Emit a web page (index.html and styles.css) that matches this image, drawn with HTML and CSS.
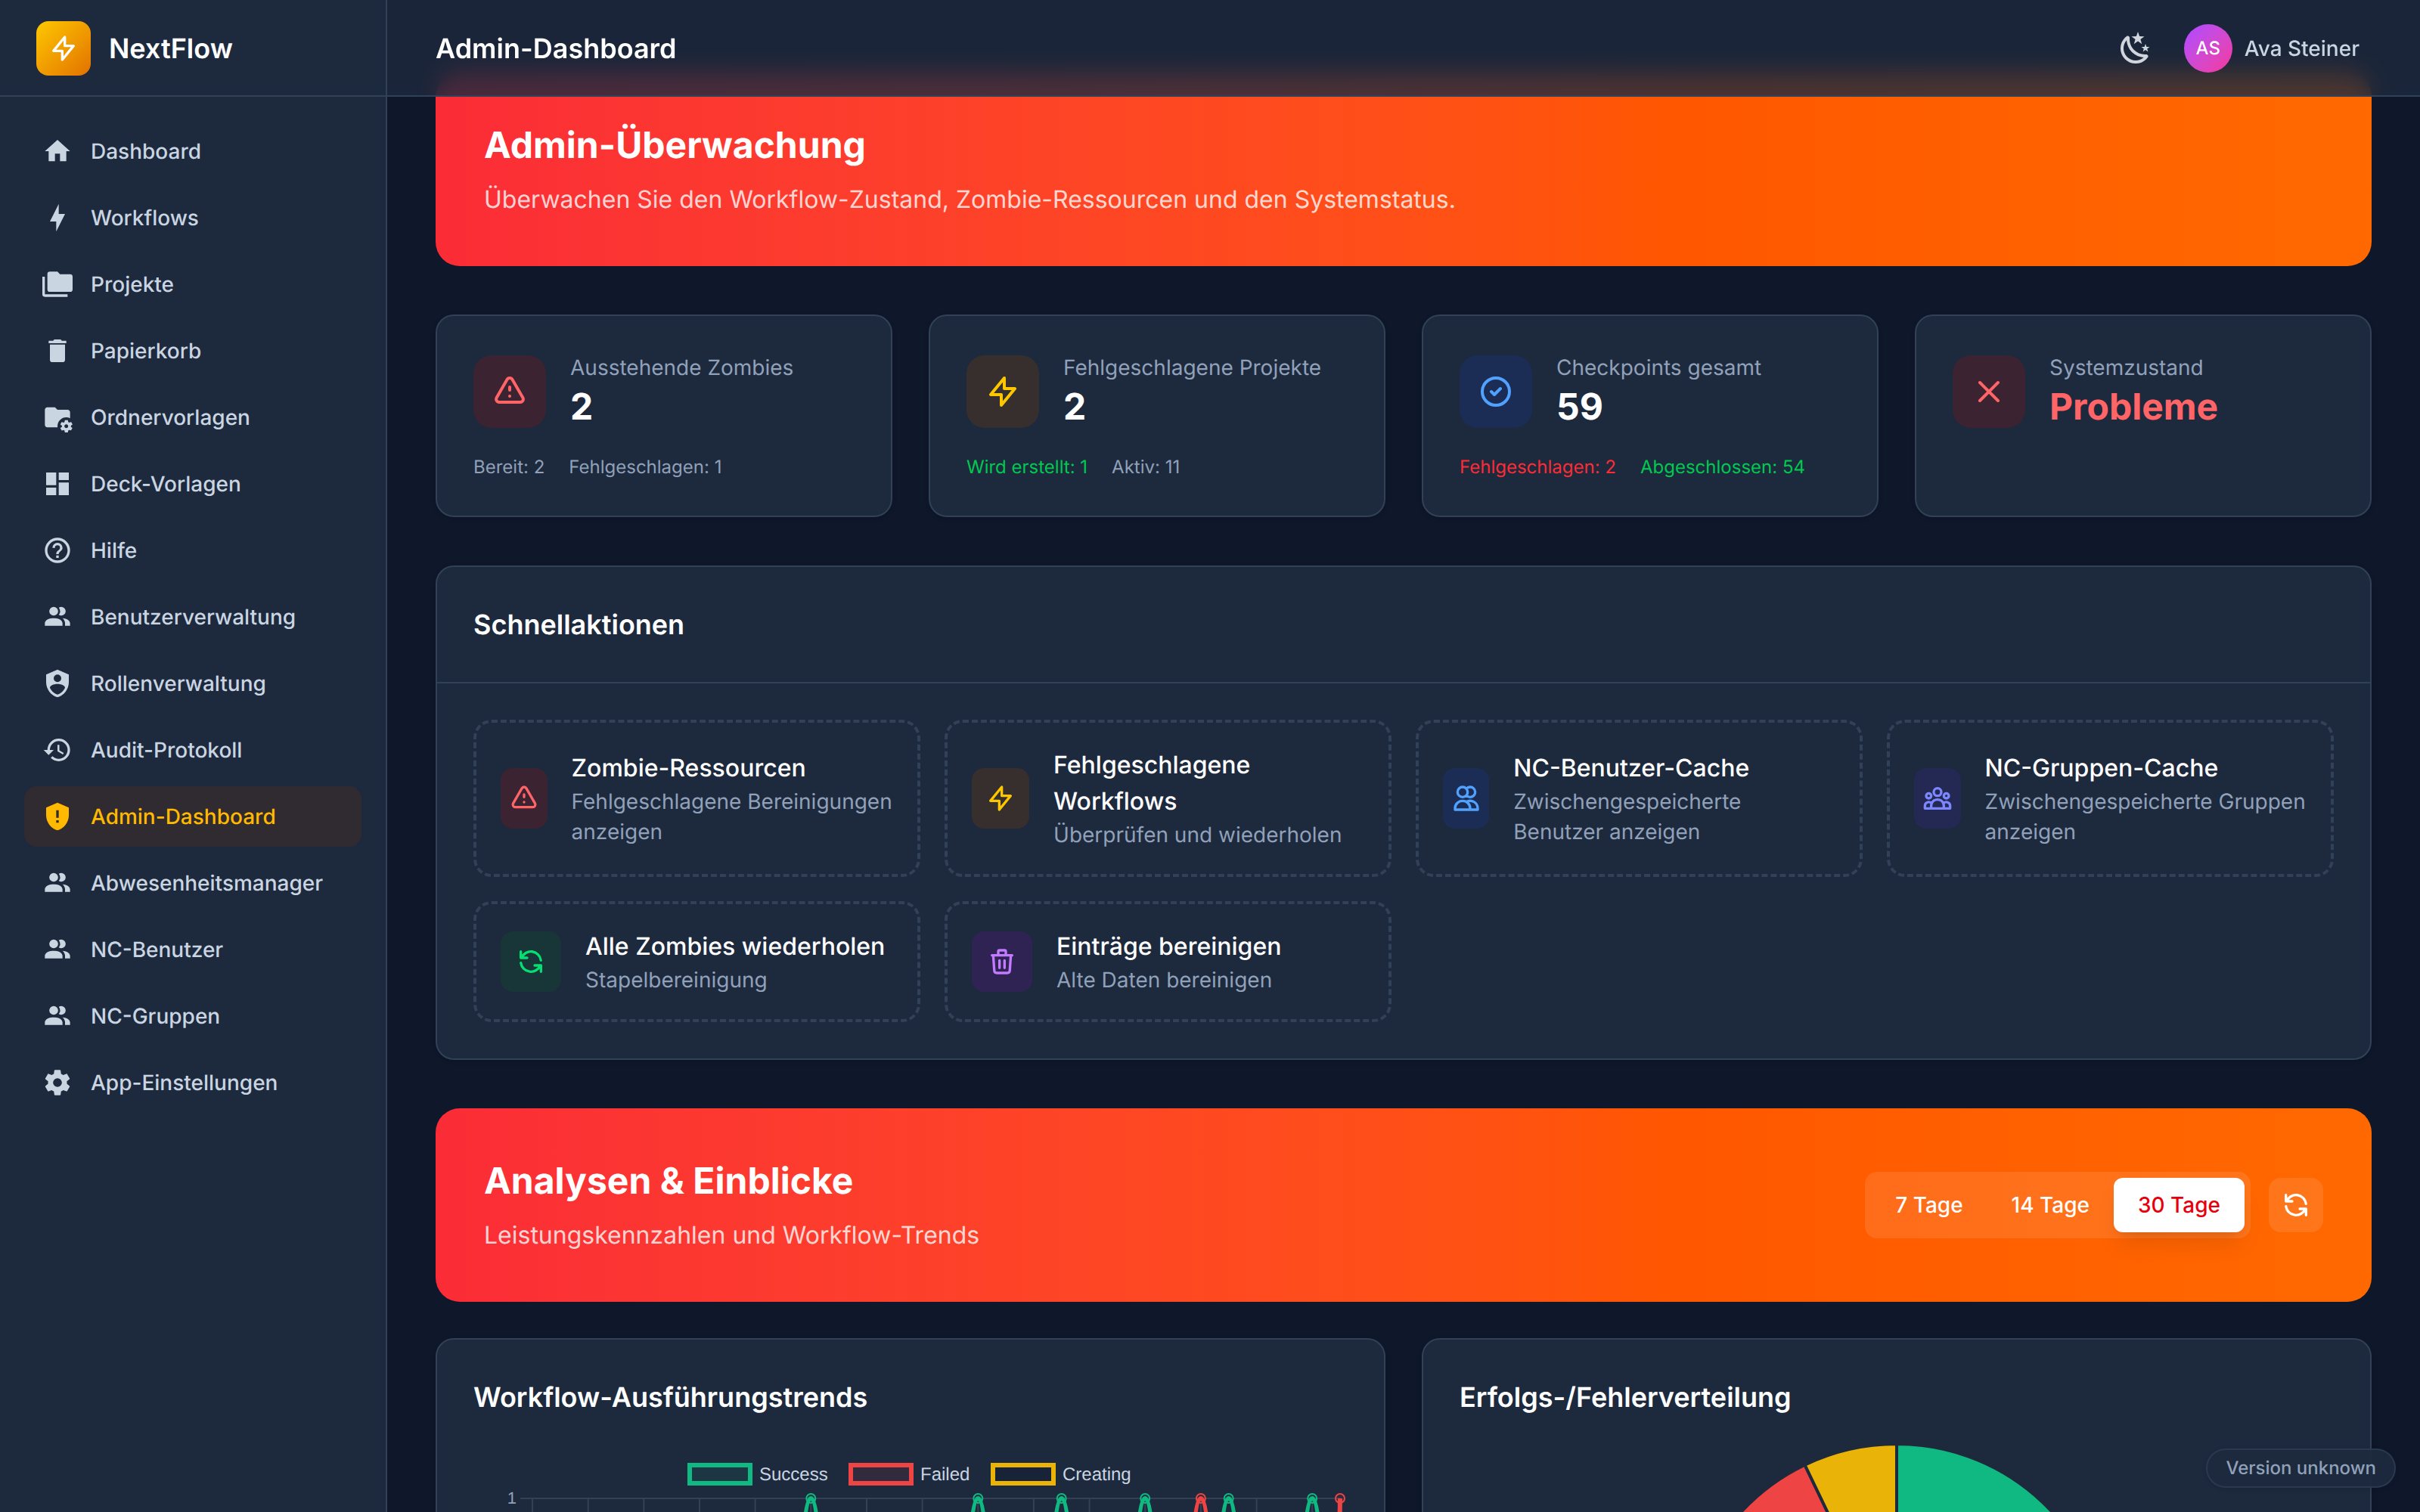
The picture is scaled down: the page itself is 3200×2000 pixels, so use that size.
FILE: index.html
```html
<!DOCTYPE html>
<html lang="de">
<head>
<meta charset="utf-8">
<title>NextFlow – Admin-Dashboard</title>
<link rel="stylesheet" href="styles.css">
</head>
<body>
<svg class="defs" width="0" height="0" aria-hidden="true">
  <symbol id="i-people" viewBox="0 0 24 24"><path d="M16 17V19H2V17S2 13 9 13 16 17 16 17M12.5 7.5A3.5 3.5 0 1 0 9 11A3.5 3.5 0 0 0 12.5 7.5M15.94 13A5.32 5.32 0 0 1 18 17V19H22V17S22 13.37 15.94 13M15 4A3.39 3.39 0 0 0 13.07 4.59A5 5 0 0 1 13.07 10.41A3.39 3.39 0 0 0 15 11A3.5 3.5 0 0 0 15 4Z"/></symbol>
  <symbol id="i-bolt" viewBox="0 0 24 24"><path d="M13 10V3L4 14h7v7l9-11h-7z"/></symbol>
  <symbol id="i-warn" viewBox="0 0 24 24"><path d="M12 9v2m0 4h.01m-6.938 4h13.856c1.54 0 2.502-1.667 1.732-3L13.732 4c-.77-1.333-2.694-1.333-3.464 0L3.34 16c-.77 1.333.192 3 1.732 3z"/></symbol>
  <symbol id="i-refresh" viewBox="0 0 24 24"><path d="M4 4v5h.582m15.356 2A8.001 8.001 0 004.582 9m0 0H9m11 11v-5h-.581m0 0a8.003 8.003 0 01-15.357-2m15.357 2H15"/></symbol>
</svg>
<div class="app">
  <aside class="sidebar">
    <div class="brand">
      <span class="logo"><svg class="line i40"><use href="#i-bolt"/></svg></span>
      <span class="brand-name">NextFlow</span>
    </div>
    <nav class="nav">
      <a class="nav-item"><svg class="fill i40" viewBox="0 0 24 24"><path d="M10,20V14H14V20H19V12H22L12,3L2,12H5V20H10Z"/></svg>Dashboard</a>
      <a class="nav-item"><svg class="fill i40" viewBox="0 0 24 24"><path d="M11 15H6L13 1V9H18L11 23V15Z"/></svg>Workflows</a>
      <a class="nav-item"><svg class="fill i40" viewBox="0 0 24 24"><path d="M22,4H14L12,2H6A2,2 0 0,0 4,4V16A2,2 0 0,0 6,18H22A2,2 0 0,0 24,16V6A2,2 0 0,0 22,4M2,6H0V20A2,2 0 0,0 2,22H20V20H2V6Z"/></svg>Projekte</a>
      <a class="nav-item"><svg class="fill i40" viewBox="0 0 24 24"><path d="M19,4H15.5L14.5,3H9.5L8.5,4H5V6H19M6,19A2,2 0 0,0 8,21H16A2,2 0 0,0 18,19V7H6V19Z"/></svg>Papierkorb</a>
      <a class="nav-item"><svg class="fill i40" viewBox="0 0 24 24"><path d="M4 4C2.89 4 2 4.89 2 6V18C2 19.11 2.9 20 4 20H12.1A7 7 0 0 1 12 19A7 7 0 0 1 19 12A7 7 0 0 1 22 12.68V8C22 6.9 21.1 6 20 6H12L10 4H4Z"/><path d="M22.7 19.6V18.6L23.8 17.8C23.9 17.7 23.9 17.6 23.9 17.5L22.9 15.8C22.9 15.7 22.7 15.7 22.6 15.7L21.4 16.2C21.1 16 20.8 15.8 20.5 15.7L20.3 14.4C20.3 14.3 20.2 14.2 20.1 14.2H18.1C17.9 14.2 17.8 14.3 17.8 14.4L17.6 15.7C17.3 15.9 17.1 16 16.8 16.2L15.6 15.7C15.5 15.7 15.4 15.7 15.3 15.8L14.3 17.5C14.3 17.6 14.3 17.7 14.4 17.8L15.5 18.6V19.6L14.4 20.4C14.3 20.5 14.3 20.6 14.3 20.7L15.3 22.4C15.4 22.5 15.5 22.5 15.6 22.5L16.8 22C17 22.2 17.3 22.4 17.6 22.5L17.8 23.8C17.9 23.9 18 24 18.1 24H20.1C20.2 24 20.3 23.9 20.3 23.8L20.5 22.5C20.8 22.3 21 22.2 21.3 22L22.5 22.4C22.6 22.4 22.7 22.4 22.8 22.3L23.8 20.6C23.9 20.5 23.9 20.4 23.8 20.4L22.7 19.6M19 20.5C18.2 20.5 17.5 19.8 17.5 19S18.2 17.5 19 17.5 20.5 18.2 20.5 19 19.9 20.5 19 20.5"/></svg>Ordnervorlagen</a>
      <a class="nav-item"><svg class="fill i40" viewBox="0 0 24 24"><path d="M13,3V9H21V3M13,21H21V11H13M3,21H11V15H3M3,13H11V3H3V13Z"/></svg>Deck-Vorlagen</a>
      <a class="nav-item"><svg class="fill i40" viewBox="0 0 24 24"><path d="M11,18H13V16H11V18M12,2A10,10 0 0,0 2,12A10,10 0 0,0 12,22A10,10 0 0,0 22,12A10,10 0 0,0 12,2M12,20C7.59,20 4,16.41 4,12C4,7.59 7.59,4 12,4C16.41,4 20,7.59 20,12C20,16.41 16.41,20 12,20M12,6A4,4 0 0,0 8,10H10A2,2 0 0,1 12,8A2,2 0 0,1 14,10C14,12 11,11.75 11,15H13C13,12.75 16,12.5 16,10A4,4 0 0,0 12,6Z"/></svg>Hilfe</a>
      <a class="nav-item"><svg class="fill i40"><use href="#i-people"/></svg>Benutzerverwaltung</a>
      <a class="nav-item"><svg class="fill i40" viewBox="0 0 24 24"><path d="M12,1L3,5V11C3,16.55 6.84,21.74 12,23C17.16,21.74 21,16.55 21,11V5L12,1M12,5A3,3 0 0,1 15,8A3,3 0 0,1 12,11A3,3 0 0,1 9,8A3,3 0 0,1 12,5M17.13,17C15.92,18.85 14.11,20.24 12,20.92C9.89,20.24 8.08,18.85 6.87,17C6.53,16.5 6.24,16 6,15.47C6,13.82 8.71,12.47 12,12.47C15.29,12.47 18,13.79 18,15.47C17.76,16 17.47,16.5 17.13,17Z"/></svg>Rollenverwaltung</a>
      <a class="nav-item"><svg class="fill i40" viewBox="0 0 24 24"><path d="M13.5,8H12V13L16.28,15.54L17,14.33L13.5,12.25V8M13,3A9,9 0 0,0 4,12H1L4.96,16.03L9,12H6A7,7 0 0,1 13,5A7,7 0 0,1 20,12A7,7 0 0,1 13,19C11.07,19 9.32,18.21 8.06,16.94L6.64,18.36C8.27,20 10.5,21 13,21A9,9 0 0,0 22,12A9,9 0 0,0 13,3"/></svg>Audit-Protokoll</a>
      <a class="nav-item active"><svg class="fill i40" viewBox="0 0 24 24"><path d="M12,1L3,5V11C3,16.55 6.84,21.74 12,23C17.16,21.74 21,16.55 21,11V5L12,1M11,7H13V13H11V7M11,15H13V17H11V15Z"/></svg>Admin-Dashboard</a>
      <a class="nav-item"><svg class="fill i40"><use href="#i-people"/></svg>Abwesenheitsmanager</a>
      <a class="nav-item"><svg class="fill i40"><use href="#i-people"/></svg>NC-Benutzer</a>
      <a class="nav-item"><svg class="fill i40"><use href="#i-people"/></svg>NC-Gruppen</a>
      <a class="nav-item"><svg class="fill i40" viewBox="0 0 24 24"><path d="M12,15.5A3.5,3.5 0 0,1 8.5,12A3.5,3.5 0 0,1 12,8.5A3.5,3.5 0 0,1 15.5,12A3.5,3.5 0 0,1 12,15.5M19.43,12.97C19.47,12.65 19.5,12.33 19.5,12C19.5,11.67 19.47,11.34 19.43,11L21.54,9.37C21.73,9.22 21.78,8.95 21.66,8.73L19.66,5.27C19.54,5.05 19.27,4.96 19.05,5.05L16.56,6.05C16.04,5.66 15.5,5.32 14.87,5.07L14.5,2.42C14.46,2.18 14.25,2 14,2H10C9.75,2 9.54,2.18 9.5,2.42L9.13,5.07C8.5,5.32 7.96,5.66 7.44,6.05L4.95,5.05C4.73,4.96 4.46,5.05 4.34,5.27L2.34,8.73C2.21,8.95 2.27,9.22 2.46,9.37L4.57,11C4.53,11.34 4.5,11.67 4.5,12C4.5,12.33 4.53,12.65 4.57,12.97L2.46,14.63C2.27,14.78 2.21,15.05 2.34,15.27L4.34,18.73C4.46,18.95 4.73,19.03 4.95,18.95L7.44,17.94C7.96,18.34 8.5,18.68 9.13,18.93L9.5,21.58C9.54,21.82 9.75,22 10,22H14C14.25,22 14.46,21.82 14.5,21.58L14.87,18.93C15.5,18.67 16.04,18.34 16.56,17.94L19.05,18.95C19.27,19.03 19.54,18.95 19.66,18.73L21.66,15.27C21.78,15.05 21.73,14.78 21.54,14.63L19.43,12.97Z"/></svg>App-Einstellungen</a>
    </nav>
  </aside>

  <div class="page">
    <header class="topbar">
      <h1 class="page-title">Admin-Dashboard</h1>
      <div class="topbar-right">
        <svg class="fill i48 moon" viewBox="0 0 24 24"><path d="M17.75,4.09L15.22,6.03L16.13,9.09L13.5,7.28L10.87,9.09L11.78,6.03L9.25,4.09L12.44,4L13.5,1L14.56,4L17.75,4.09M21.25,11L19.61,12.25L20.2,14.23L18.5,13.06L16.8,14.23L17.39,12.25L15.75,11L17.81,10.95L18.5,9L19.19,10.95L21.25,11M18.97,15.95C19.8,15.87 20.69,17.05 20.16,17.8C19.84,18.25 19.5,18.67 19.08,19.07C15.17,23 8.84,23 4.94,19.07C1.03,15.17 1.03,8.83 4.94,4.93C5.34,4.53 5.76,4.17 6.21,3.85C6.96,3.32 8.14,4.21 8.06,5.04C7.79,7.9 8.75,10.87 10.95,13.06C13.14,15.26 16.1,16.22 18.97,15.95M17.33,17.97C14.5,17.81 11.7,16.64 9.53,14.5C7.36,12.31 6.2,9.5 6.04,6.68C3.23,9.82 3.34,14.64 6.35,17.66C9.37,20.67 14.19,20.78 17.33,17.97Z"/></svg>
        <div class="user">
          <span class="avatar">AS</span>
          <span>Ava Steiner</span>
        </div>
      </div>
    </header>

    <main class="content">
      <section class="banner">
        <div>
          <h2 class="banner-title">Admin-Überwachung</h2>
          <p class="banner-sub">Überwachen Sie den Workflow-Zustand, Zombie-Ressourcen und den Systemstatus.</p>
        </div>
      </section>

      <section class="stats">
        <article class="card stat">
          <div class="stat-head">
            <span class="stat-icon red"><svg class="line i48"><use href="#i-warn"/></svg></span>
            <div><p class="stat-label">Ausstehende Zombies</p><p class="stat-value">2</p></div>
          </div>
          <div class="stat-foot"><span>Bereit: 2</span><span>Fehlgeschlagen: 1</span></div>
        </article>
        <article class="card stat">
          <div class="stat-head">
            <span class="stat-icon yellow"><svg class="line i48"><use href="#i-bolt"/></svg></span>
            <div><p class="stat-label">Fehlgeschlagene Projekte</p><p class="stat-value">2</p></div>
          </div>
          <div class="stat-foot"><span class="ok">Wird erstellt: 1</span><span>Aktiv: 11</span></div>
        </article>
        <article class="card stat">
          <div class="stat-head">
            <span class="stat-icon blue"><svg class="line i48" viewBox="0 0 24 24"><path d="M9 12l2 2 4-4m6 2a9 9 0 11-18 0 9 9 0 0118 0z"/></svg></span>
            <div><p class="stat-label">Checkpoints gesamt</p><p class="stat-value">59</p></div>
          </div>
          <div class="stat-foot"><span class="bad">Fehlgeschlagen: 2</span><span class="ok">Abgeschlossen: 54</span></div>
        </article>
        <article class="card stat">
          <div class="stat-head">
            <span class="stat-icon red"><svg class="line i48" viewBox="0 0 24 24"><path d="M6 18L18 6M6 6l12 12"/></svg></span>
            <div><p class="stat-label">Systemzustand</p><p class="stat-value problem">Probleme</p></div>
          </div>
        </article>
      </section>

      <section class="card quick">
        <h3 class="quick-head">Schnellaktionen</h3>
        <div class="quick-grid">
          <a class="action">
            <span class="action-icon red"><svg class="line i40"><use href="#i-warn"/></svg></span>
            <div><p class="action-title">Zombie-Ressourcen</p><p class="action-sub">Fehlgeschlagene Bereinigungen anzeigen</p></div>
          </a>
          <a class="action">
            <span class="action-icon yellow"><svg class="line i40"><use href="#i-bolt"/></svg></span>
            <div><p class="action-title">Fehlgeschlagene Workflows</p><p class="action-sub">Überprüfen und wiederholen</p></div>
          </a>
          <a class="action">
            <span class="action-icon blue"><svg class="line i40" viewBox="0 0 24 24"><path d="M12 4.354a4 4 0 110 5.292M15 21H3v-1a6 6 0 0112 0v1zm0 0h6v-1a6 6 0 00-9-5.197M13 7a4 4 0 11-8 0 4 4 0 018 0z"/></svg></span>
            <div><p class="action-title">NC-Benutzer-Cache</p><p class="action-sub">Zwischengespeicherte Benutzer anzeigen</p></div>
          </a>
          <a class="action">
            <span class="action-icon indigo"><svg class="line i40" viewBox="0 0 24 24"><path d="M17 20h5v-2a3 3 0 00-5.356-1.857M17 20H7m10 0v-2c0-.656-.126-1.283-.356-1.857M7 20H2v-2a3 3 0 015.356-1.857M7 20v-2c0-.656.126-1.283.356-1.857m0 0a5.002 5.002 0 019.288 0M15 7a3 3 0 11-6 0 3 3 0 016 0zm6 3a2 2 0 11-4 0 2 2 0 014 0zM7 10a2 2 0 11-4 0 2 2 0 014 0z"/></svg></span>
            <div><p class="action-title">NC-Gruppen-Cache</p><p class="action-sub">Zwischengespeicherte Gruppen anzeigen</p></div>
          </a>
          <a class="action">
            <span class="action-icon green"><svg class="line i40"><use href="#i-refresh"/></svg></span>
            <div><p class="action-title">Alle Zombies wiederholen</p><p class="action-sub">Stapelbereinigung</p></div>
          </a>
          <a class="action">
            <span class="action-icon purple"><svg class="line i40" viewBox="0 0 24 24"><path d="M19 7l-.867 12.142A2 2 0 0116.138 21H7.862a2 2 0 01-1.995-1.858L5 7m5 4v6m4-6v6m1-10V4a1 1 0 00-1-1h-4a1 1 0 00-1 1v3M4 7h16"/></svg></span>
            <div><p class="action-title">Einträge bereinigen</p><p class="action-sub">Alte Daten bereinigen</p></div>
          </a>
        </div>
      </section>

      <section class="banner">
        <div>
          <h2 class="banner-title">Analysen &amp; Einblicke</h2>
          <p class="banner-sub">Leistungskennzahlen und Workflow-Trends</p>
        </div>
        <div class="banner-tools">
          <div class="range">
            <button class="range-btn">7 Tage</button><button class="range-btn">14 Tage</button><button class="range-btn selected">30 Tage</button>
          </div>
          <button class="reload"><svg class="line i40"><use href="#i-refresh"/></svg></button>
        </div>
      </section>

      <section class="charts">
        <article class="card chart-card">
          <h3 class="chart-title">Workflow-Ausführungstrends</h3>
          <svg class="chart" viewBox="0 0 1156 600" width="1156" height="600">
            <defs>
              <path id="peak" d="M-36.8 490C-27.5 307 -14.7 0 0 0S27.5 307 36.8 490"/>
            </defs>
            <g class="legend">
              <rect x="286" y="30" width="80" height="24" class="s-green"/><text x="378" y="50">Success</text>
              <rect x="499" y="30" width="80" height="24" class="s-red"/><text x="591" y="50">Failed</text>
              <rect x="687" y="30" width="80" height="24" class="s-yellow"/><text x="779" y="50">Creating</text>
            </g>
            <path class="grid" d="M62 74H1146M78 74V600M151.7 74V600M225.3 74V600M299 74V600M372.6 74V600M446.3 74V600M520 74V600M593.6 74V600M667.3 74V600M740.9 74V600M814.6 74V600M888.2 74V600M961.9 74V600M1035.6 74V600M1109.2 74V600"/>
            <text class="tick" x="57" y="81" text-anchor="end">1</text>
            <g class="l-red">
              <use href="#peak" x="961.9" y="74"/>
              <path d="M1109.2 564C1136.7 564 1143 260 1146 74"/>
            </g>
            <g class="l-green">
              <use href="#peak" x="446.3" y="74"/>
              <use href="#peak" x="667.3" y="74"/>
              <use href="#peak" x="777.7" y="74"/>
              <use href="#peak" x="888.2" y="74"/>
              <use href="#peak" x="998.7" y="74"/>
              <use href="#peak" x="1109.2" y="74"/>
            </g>
            <g class="dots d-green">
              <circle cx="446.3" cy="74" r="6"/><circle cx="667.3" cy="74" r="6"/><circle cx="777.7" cy="74" r="6"/><circle cx="888.2" cy="74" r="6"/><circle cx="998.7" cy="74" r="6"/><circle cx="1109.2" cy="74" r="6"/>
            </g>
            <g class="dots d-red">
              <circle cx="961.9" cy="74" r="6"/><circle cx="1146" cy="74" r="6"/>
            </g>
          </svg>
        </article>
        <article class="card chart-card">
          <h3 class="chart-title">Erfolgs-/Fehlerverteilung</h3>
          <svg class="chart pie" viewBox="0 0 1156 600" width="1156" height="600">
            <path class="p-green" d="M578 282V2A280 280 0 1 1 326 404Z"/>
            <path class="p-red" d="M578 282L326 404A280 280 0 0 1 456.500 29.700Z"/>
            <path class="p-yellow" d="M578 282L456.500 29.700A280 280 0 0 1 578 2Z"/>
          </svg>
        </article>
      </section>
    </main>
    <div class="version">Version unknown</div>
  </div>
</div>
</body>
</html>
```
FILE: styles.css
```css
* { box-sizing: border-box; margin: 0; padding: 0; }
html, body { height: 100%; overflow: hidden; }
body {
  background: #0f172b;
  color: #fff;
  font-family: Inter, "Liberation Sans", sans-serif;
  font-size: 32px;
  line-height: 48px;
  text-rendering: geometricPrecision;
}
h1, h2, h3 { font-weight: 600; }
button { border: 0; background: none; color: inherit; font: inherit; }
.defs { position: absolute; }
svg { display: block; flex-shrink: 0; }
.i40 { width: 40px; height: 40px; }
.i48 { width: 48px; height: 48px; }
.fill { fill: currentColor; }
.line { fill: none; stroke: currentColor; stroke-width: 2; stroke-linecap: round; stroke-linejoin: round; }

.app { display: flex; height: 2000px; }

/* Sidebar */
.sidebar { width: 512px; flex-shrink: 0; background: #1d293d; border-right: 2px solid #314158; }
.brand { height: 128px; display: flex; align-items: center; gap: 24px; padding: 0 48px; box-shadow: inset 0 -2px #314158; }
.logo { width: 72px; height: 72px; display: flex; align-items: center; justify-content: center; border-radius: 16px; background: linear-gradient(to bottom right in oklab, oklch(85.2% .199 91.936), oklch(66.6% .179 58.318)); }
.brand-name { font-size: 36px; line-height: 56px; font-weight: 600; }
.nav { display: flex; flex-direction: column; gap: 8px; padding: 32px; }
.nav-item { height: 80px; display: flex; align-items: center; gap: 24px; padding: 0 24px; border-radius: 16px; color: #cad5e2; font-size: 28px; line-height: 40px; font-weight: 500; white-space: nowrap; }
.nav-item.active { color: #ffb900; background: rgba(123, 51, 6, .2); }

/* Top bar: floats over the scrolled content */
.page { position: relative; flex: 1; min-width: 0; overflow: hidden; }
.topbar { position: absolute; inset: 0 0 auto 0; z-index: 2; height: 128px; display: flex; align-items: center; justify-content: space-between; padding: 2px 80px 0 64px; background: rgba(29, 41, 61, .8); backdrop-filter: blur(16px); border-bottom: 2px solid #314158; }
.page-title { font-size: 36px; line-height: 56px; }
.topbar-right { display: flex; align-items: center; gap: 40px; }
.moon { color: #d1d5dc; }
.user { display: flex; align-items: center; gap: 16px; color: #cad5e2; font-size: 28px; line-height: 40px; font-weight: 500; }
.avatar { width: 64px; height: 64px; display: flex; align-items: center; justify-content: center; border-radius: 50%; background: linear-gradient(to bottom right in oklab, oklch(62.7% .265 303.9), oklch(65.6% .241 354.308)); color: #fff; font-size: 24px; line-height: 32px; font-weight: 500; }

.content { display: flex; flex-direction: column; gap: 64px; padding: 96px 64px 64px; }

/* Banners */
.banner { height: 256px; display: flex; align-items: center; justify-content: space-between; padding: 64px; border-radius: 32px; background: linear-gradient(to right in oklab, oklch(63.7% .237 25.331), oklch(70.5% .213 47.604)); }
.banner-title { font-size: 48px; line-height: 64px; font-weight: 700; }
.banner-sub { margin-top: 16px; color: rgba(255, 255, 255, .8); }
.banner-tools { display: flex; align-items: center; gap: 24px; }
.range { display: flex; padding: 8px; border-radius: 16px; background: rgba(255, 255, 255, .1); }
.range-btn { padding: 16px 32px; border-radius: 12px; font-size: 28px; line-height: 40px; font-weight: 500; }
.range-btn.selected { background: #fff; color: #e7000b; box-shadow: 0 20px 30px -6px rgba(0, 0, 0, .1), 0 8px 12px -8px rgba(0, 0, 0, .1); }
.reload { padding: 16px; border-radius: 16px; background: rgba(255, 255, 255, .1); }

/* Cards */
.card { background: #1d293d; border: 2px solid #314158; border-radius: 24px; box-shadow: 0 2px 6px rgba(0, 0, 0, .1), 0 2px 4px -2px rgba(0, 0, 0, .1); }
.red { color: #ff6467; background: rgba(130, 24, 26, .3); }
.yellow { color: #fdc700; background: rgba(115, 62, 10, .3); }
.blue { color: #51a2ff; background: rgba(28, 57, 142, .3); }
.indigo { color: #7c86ff; background: rgba(49, 44, 133, .3); }
.green { color: #05df72; background: rgba(13, 84, 43, .3); }
.purple { color: #c27aff; background: rgba(89, 22, 139, .3); }

.stats { display: grid; grid-template-columns: repeat(4, 1fr); gap: 48px; }
.stat { padding: 48px; }
.stat-head { display: flex; align-items: center; gap: 32px; }
.stat-icon { width: 96px; height: 96px; display: flex; align-items: center; justify-content: center; border-radius: 24px; }
.stat-label { color: #90a1b9; font-size: 28px; line-height: 40px; }
.stat-value { font-size: 48px; line-height: 64px; font-weight: 700; }
.stat-value.problem { color: #ff6467; }
.stat-foot { display: flex; gap: 32px; margin-top: 32px; color: #90a1b9; font-size: 24px; line-height: 32px; }
.ok { color: #00c950; }
.bad { color: #fb2c36; }

/* Quick actions */
.quick-head { padding: 48px; border-bottom: 2px solid #314158; font-size: 36px; line-height: 56px; }
.quick-grid { display: grid; grid-template-columns: repeat(4, 1fr); gap: 32px; padding: 48px; }
.action { display: flex; align-items: center; gap: 32px; padding: 32px; border: 4px dashed #314158; border-radius: 24px; }
.action-icon { width: 80px; height: 80px; display: flex; align-items: center; justify-content: center; border-radius: 16px; }
.action-title { font-weight: 500; }
.action-sub { color: #90a1b9; font-size: 28px; line-height: 40px; }

/* Charts */
.charts { display: grid; grid-template-columns: repeat(2, 1fr); gap: 48px; margin-top: -16px; }
.chart-card { padding: 48px; }
.chart-title { font-size: 36px; line-height: 56px; margin-bottom: 32px; }
.chart text { font: 24px "Liberation Sans", Arial, sans-serif; fill: #cad5e2; }
.chart .tick { font-size: 22px; fill: #90a1b9; }
.legend rect { stroke-width: 6; }
.s-green { stroke: #10b981; fill: rgba(16, 185, 129, .1); }
.s-red { stroke: #ef4444; fill: rgba(239, 68, 68, .1); }
.s-yellow { stroke: #eab308; fill: rgba(15, 23, 43, .3); }
.grid { stroke: #334155; stroke-width: 2; }
.l-green, .l-red { fill: none; stroke-width: 6; }
.l-green { stroke: #10b981; }
.l-red { stroke: #ef4444; }
.dots { stroke-width: 2; }
.d-green { stroke: #10b981; fill: rgba(16, 185, 129, .1); }
.d-red { stroke: #ef4444; fill: rgba(239, 68, 68, .1); }
.pie path { stroke: #1e293b; stroke-width: 4; stroke-linejoin: bevel; }
.p-green { fill: #10b981; }
.p-red { fill: #ef4444; }
.p-yellow { fill: #eab308; }

.version { position: absolute; right: 32px; bottom: 32px; padding: 8px 24px; border: 2px solid rgba(49, 65, 88, .7); border-radius: 26px; background: rgba(29, 41, 61, .95); color: #90a1b9; font-size: 24px; line-height: 32px; font-weight: 500; box-shadow: 0 2px 6px rgba(0, 0, 0, .1); }
```
